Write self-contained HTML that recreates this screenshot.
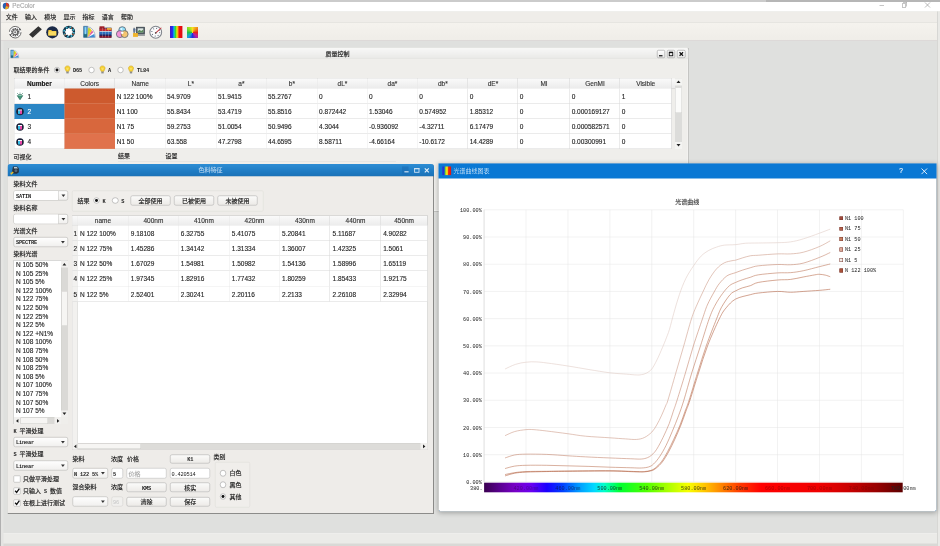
<!DOCTYPE html>
<html lang="zh"><head><meta charset="utf-8"><title>PeColor</title>
<style>
html,body{margin:0;padding:0;}
body{width:940px;height:546px;overflow:hidden;background:#dfe0df;position:relative;}
#app{position:absolute;left:0;top:0;width:1880px;height:1092px;transform:scale(.5);transform-origin:0 0;overflow:hidden;filter:opacity(1);font-family:"Liberation Sans","Noto Sans CJK SC",sans-serif;color:#222;}
#app div{position:absolute;box-sizing:border-box;}
#app svg{position:absolute;overflow:visible;}
.t{white-space:nowrap;}
.zh{font-family:"Liberation Sans","Noto Sans CJK SC",sans-serif;font-size:12px;color:#1a1a1a;-webkit-text-stroke:0.3px currentColor;}
.mono{font-family:"Liberation Mono","Noto Sans CJK SC",monospace;font-size:10.6px;letter-spacing:-0.36px;color:#1a1a1a;font-weight:bold;}
.ui{font-family:"Liberation Sans","Noto Sans CJK SC",sans-serif;font-size:13px;color:#1e1e1e;-webkit-text-stroke:0.25px currentColor;}
.btn{border:1px solid #a9a9a9;border-radius:4px;background:linear-gradient(#fbfbfa,#eceae7);}
.inp{border:1px solid #b4b4b4;border-radius:4px;background:#fff;}
.hdr{background:linear-gradient(#fafafa,#ececec);border-right:1px solid #d0d0d0;border-bottom:1px solid #c8c8c8;}
.ax{font-family:"Liberation Mono","Noto Sans CJK SC",monospace;font-size:10.4px;color:#222;}
.cell{background:#fff;border-right:1px solid #d6d6d6;border-bottom:1px solid #d6d6d6;}
</style></head><body><div id="app">
<div style="left:0px;top:0px;width:1880px;height:4px;background:#cbcbcb;"></div>
<div style="left:1532px;top:0px;width:348px;height:4px;background:#b6b6b6;"></div>
<div style="left:0px;top:4px;width:1880px;height:19px;background:#fff;"></div>
<svg style="left:5.2px;top:5.2px" width="14" height="14" viewBox="0 0 14 14"><circle cx="7" cy="7" r="6.5" fill="#2a5fb0"/><path d="M7 7 L7 .5 A6.5 6.5 0 0 1 13 9 Z" fill="#d93a2a"/><path d="M7 7 L13 9 A6.5 6.5 0 0 1 5 13.2 Z" fill="#f0b020"/></svg>
<div class="t ui" style="left:24.4px;top:2px;height:20px;line-height:20px;text-align:left;color:#a9a9a9;font-size:12.6px;">PeColor</div>
<div style="left:1758.8px;top:10px;width:9.2px;height:1.2px;background:#8c8c8c;"></div>
<div style="left:1804px;top:6.8px;width:8px;height:8px;border:1px solid #8c8c8c;"></div>
<div style="left:1806px;top:5.2px;width:8px;height:8px;border:1px solid #8c8c8c;border-left:none;border-bottom:none;"></div>
<svg style="left:1850px;top:5.2px" width="10" height="10" viewBox="0 0 10 10"><path d="M0 0L10 10M10 0L0 10" stroke="#8c8c8c" stroke-width="1.2"/></svg>
<div style="left:0px;top:23px;width:1880px;height:21px;background:#efede9;"></div>
<div class="t zh" style="left:11.6px;top:23.6px;height:20px;line-height:20px;text-align:left;">文件</div>
<div class="t zh" style="left:50px;top:23.6px;height:20px;line-height:20px;text-align:left;">输入</div>
<div class="t zh" style="left:88.4px;top:23.6px;height:20px;line-height:20px;text-align:left;">模块</div>
<div class="t zh" style="left:126.8px;top:23.6px;height:20px;line-height:20px;text-align:left;">显示</div>
<div class="t zh" style="left:165.2px;top:23.6px;height:20px;line-height:20px;text-align:left;">指标</div>
<div class="t zh" style="left:203.6px;top:23.6px;height:20px;line-height:20px;text-align:left;">语言</div>
<div class="t zh" style="left:242px;top:23.6px;height:20px;line-height:20px;text-align:left;">帮助</div>
<div style="left:0px;top:44px;width:1880px;height:38.4px;background:linear-gradient(#f5f3ee,#efede8);border-top:1px solid #e3e0db;border-bottom:1px solid #d3cdcc;"></div>
<div style="left:0px;top:82.4px;width:1880px;height:984px;background:#dfe0de;"></div>
<div style="left:0px;top:1067px;width:1880px;height:25px;background:#ebebe8;border-top:1px solid #f6f6f4;"></div>
<div style="left:0px;top:1087px;width:1880px;height:5px;background:#d9d9d6;"></div>
<div style="left:0px;top:4px;width:2.4px;height:1088px;background:#b0b0b0;"></div>
<div style="left:2.4px;top:82px;width:4.4px;height:1010px;background:#e4e4e2;"></div>
<div style="left:1874px;top:23px;width:6px;height:1070px;background:#e9e9e6;border-left:1px solid #c4c4c2;"></div>
<svg style="left:17.2px;top:51px" width="26.8" height="26.8" viewBox="0 0 24 24"><circle cx="12" cy="12" r="10.4" fill="#fdfdfd" stroke="#626262" stroke-width="1.700" stroke-dasharray="27 5.700"/><path d="M20.500 4.500 l2.200 3.800 l-4.200 .4Z M3.500 19.500 l-2.200 -3.800 l4.200 -.4Z" fill="#555"/><circle cx="12" cy="12" r="6.200" fill="none" stroke="#5c5c5c" stroke-width="2.800" stroke-dasharray="2.600 1.300"/><circle cx="12" cy="12" r="4.500" fill="#f4f4f4" stroke="#5c5c5c" stroke-width="1.800"/><circle cx="12" cy="12" r="1.900" fill="#777"/></svg>
<svg style="left:58.4px;top:51.4px" width="26" height="26" viewBox="0 0 24 24"><path d="M0.200 16.700 L17.200 1.200 L23.800 7.100 L6.800 22.600 Z" fill="#2f2f2f"/><path d="M5 16.500 L17.500 5.200 M8 19 L20 8" stroke="#4c4c4c" stroke-width="1"/></svg>
<svg style="left:91.6px;top:51.6px" width="25.2" height="25.2" viewBox="0 0 24 24"><circle cx="12" cy="12" r="11.600" fill="#1c2b48"/><path d="M4.500 7.500 h5.500 l1.500 2 h8 v8.500 h-15 Z" fill="#f0c43c"/><path d="M4.500 10.500 h15 v7.500 h-15 Z" fill="#fadc62"/></svg>
<svg style="left:124.8px;top:51.4px" width="25.6" height="25.6" viewBox="0 0 24 24"><circle cx="12" cy="12" r="11.600" fill="#15344a"/><circle cx="12" cy="12" r="9" fill="none" stroke="#3fb4cc" stroke-width="3.400" stroke-dasharray="3.200 3.870"/><circle cx="5" cy="17.500" r="1.600" fill="#b0683c"/><circle cx="19.500" cy="16.500" r="1.600" fill="#b0683c"/><circle cx="17" cy="4.500" r="1.400" fill="#b0683c"/><path d="M12 4 L14.300 6.450 L17.660 6.340 L17.550 9.700 L20 12 L17.550 14.300 L17.660 17.660 L14.300 17.550 L12 20 L9.700 17.550 L6.340 17.660 L6.450 14.300 L4 12 L6.450 9.700 L6.340 6.340 L9.700 6.450Z" fill="#fff"/></svg>
<svg style="left:165px;top:51.4px" width="26" height="26" viewBox="0 0 24 24"><path d="M2 1.500 h7.500 v20.500 h-7.500 Z" fill="#3d8ec6" stroke="#2a5c88" stroke-width="1"/><path d="M2.500 15 h6.500 v6.500 h-6.500Z" fill="#1f6a80"/><path d="M4 3 h3 v13 h-3 Z" fill="#8ed4f0"/><path d="M9.500 22 L9.500 2.500 A14 19.500 0 0 1 23.500 22 Z" fill="#fafafa" stroke="#6a83a8" stroke-width="1"/><path d="M9.500 22 L10.500 3.500 L15 6Z" fill="#b8d030"/><path d="M9.500 22 L14 5.500 L17.500 9Z" fill="#f0cc20"/><path d="M9.500 22 L17.500 9 L20 12.500Z" fill="#e05aa0"/><path d="M9.500 22 L21.600 15.500 L23 21.500Z" fill="#3d8cd4"/></svg>
<svg style="left:198.2px;top:51.4px" width="26" height="26" viewBox="0 0 24 24"><rect x="1" y="4" width="22" height="18.500" fill="#1c2a5a"/><rect x="1" y="1.500" width="9" height="4.500" fill="#9c1c24"/><rect x="1" y="5.500" width="22" height="5" fill="#c02830"/><rect x="1" y="10.200" width="22" height="1.600" fill="#dce8f4"/><rect x="1" y="11.800" width="22" height="5.200" fill="#2a6cbc"/><rect x="1" y="17" width="22" height="2.500" fill="#2a1c58"/><rect x="1" y="19.500" width="22" height="3" fill="#8c1428"/><path d="M6.500 4V22M12 4V22M17.500 4V22" stroke="#efe6da" stroke-width="0.900" opacity=".55"/><rect x="14.500" y="4.500" width="8.500" height="3.600" fill="#e4a838"/></svg>
<svg style="left:231.3px;top:50.9px" width="27" height="27" viewBox="0 0 24 24"><circle cx="12" cy="8.300" r="6.200" fill="#8fdcf6" stroke="#59626e" stroke-width="1.400"/><circle cx="7.800" cy="15.300" r="6.200" fill="#f48ad4" stroke="#59626e" stroke-width="1.400" fill-opacity=".92"/><circle cx="16.200" cy="15.300" r="6.200" fill="#f6c266" stroke="#59626e" stroke-width="1.400" fill-opacity=".92"/><circle cx="12" cy="12.800" r="2.300" fill="#fff"/><circle cx="10.500" cy="6.200" r="1.800" fill="#e8f8ff"/></svg>
<svg style="left:265px;top:51.4px" width="26" height="26" viewBox="0 0 24 24"><rect x="7" y="3" width="15.500" height="12.500" fill="#4f5962" stroke="#343c44" stroke-width="1"/><rect x="9.500" y="5.200" width="10.500" height="7.600" fill="#dfe8e4"/><path d="M9.500 10.500 l3.500 -2.500 l3 2 l4 -2.500 v5.300 h-10.500Z" fill="#5c8c5c"/><rect x="5" y="16" width="18" height="3" fill="#8a8f92"/><path d="M3 4 v12" stroke="#4a5a66" stroke-width="2"/><rect x="1" y="14" width="9" height="7" fill="#f0b428"/><path d="M1 7 h5 M1 10 h5" stroke="#3f5f8f" stroke-width="1.4"/></svg>
<svg style="left:298.1px;top:50.9px" width="27" height="27" viewBox="0 0 24 24"><circle cx="12" cy="12" r="10.5" fill="#fbfbfb" stroke="#80858c" stroke-width="1.8"/><circle cx="12" cy="12" r="7" fill="none" stroke="#5d6a7c" stroke-width="2" stroke-dasharray="1.6 3.9"/><path d="M11 14 L22 4" stroke="#c8303a" stroke-width="1.8"/><circle cx="12" cy="13" r="1.6" fill="#555"/></svg>
<svg style="left:339.6px;top:52.4px" width="24.8" height="24" viewBox="0 0 62 60" preserveAspectRatio="none"><defs><linearGradient id="rb" x1="0" x2="1" y1="0" y2="0"><stop offset="0" stop-color="#4a10c8"/><stop offset=".2" stop-color="#2030f0"/><stop offset=".32" stop-color="#10b8e8"/><stop offset=".44" stop-color="#30d830"/><stop offset=".57" stop-color="#f0f010"/><stop offset=".66" stop-color="#f87010"/><stop offset=".75" stop-color="#f01010"/><stop offset="1" stop-color="#e00810"/></linearGradient></defs><rect width="62" height="60" fill="url(#rb)"/></svg>
<div style="left:374px;top:53.6px;width:22px;height:22px;background:conic-gradient(from 0deg,#f8e020,#f09018 12%,#e82020 25%,#c020a0 37%,#2030e0 50%,#18a0e0 62%,#20c040 75%,#90e020 88%,#f8e020);"></div>
<div style="left:16px;top:95.2px;width:1361.6px;height:328px;background:#efeeeb;border:1px solid #9c9c9a;border-bottom:1.6px solid #6a6a68;border-radius:5px 5px 0 0;box-shadow:inset 0 0 0 2px #f7f7f5;"></div>
<div style="left:17px;top:96.2px;width:1359.6px;height:22.2px;background:linear-gradient(#f8f8f7,#e9e9e7);border-bottom:1px solid #c9c9c7;border-radius:4px 4px 0 0;"></div>
<svg style="left:20.2px;top:99px" width="18" height="18" viewBox="0 0 24 24"><path d="M2 1.500 h7.500 v20.500 h-7.500 Z" fill="#3d8ec6" stroke="#2a5c88" stroke-width="1"/><path d="M2.500 15 h6.500 v6.500 h-6.500Z" fill="#1f6a80"/><path d="M4 3 h3 v13 h-3 Z" fill="#8ed4f0"/><path d="M9.500 22 L9.500 2.500 A14 19.500 0 0 1 23.500 22 Z" fill="#fafafa" stroke="#6a83a8" stroke-width="1"/><path d="M9.500 22 L10.500 3.500 L15 6Z" fill="#b8d030"/><path d="M9.500 22 L14 5.500 L17.500 9Z" fill="#f0cc20"/><path d="M9.500 22 L17.500 9 L20 12.500Z" fill="#e05aa0"/><path d="M9.500 22 L21.600 15.500 L23 21.500Z" fill="#3d8cd4"/></svg>
<div class="t zh" style="left:0px;top:97.6px;height:20px;line-height:20px;width:1350px;text-align:center;">质量控制</div>
<div style="left:1314px;top:100px;width:16px;height:16px;border:1px solid #8f8f8f;border-radius:3px;background:linear-gradient(#fff,#e8e8e8);"></div>
<svg style="left:1314px;top:100px" width="16" height="16" viewBox="0 0 16 16"><path d="M4 11.5h7" stroke="#111" stroke-width="2.4"/></svg>
<div style="left:1334px;top:100px;width:16px;height:16px;border:1px solid #8f8f8f;border-radius:3px;background:linear-gradient(#fff,#e8e8e8);"></div>
<svg style="left:1334px;top:100px" width="16" height="16" viewBox="0 0 16 16"><rect x="4.5" y="4.5" width="7" height="7" fill="none" stroke="#111" stroke-width="1.8"/><path d="M4.5 5h7" stroke="#111" stroke-width="2.6"/></svg>
<div style="left:1354px;top:100px;width:17.2px;height:16px;border:1px solid #8f8f8f;border-radius:3px;background:linear-gradient(#fff,#e8e8e8);"></div>
<svg style="left:1354px;top:100px" width="17.2" height="16" viewBox="0 0 16 16"><path d="M4.5 4.5L11.5 11.5M11.5 4.5L4.5 11.5" stroke="#111" stroke-width="2.4"/></svg>
<div class="t zh" style="left:27.2px;top:130px;height:20px;line-height:20px;text-align:left;">取结果的条件</div>
<div style="left:107.8px;top:133.8px;width:12.4px;height:12.4px;border-radius:50%;background:#fff;border:1px solid #8c8c8c;"></div>
<div style="left:111.2px;top:137.2px;width:5.6px;height:5.6px;border-radius:50%;background:#111;"></div>
<svg style="left:129.2px;top:131.2px" width="12" height="16.8" viewBox="0 0 12 17"><path d="M6 .8 C2.6 .8 .8 3.2 .8 5.8 C.8 8.4 3 9.6 3.4 12 h5.2 C9 9.6 11.2 8.4 11.2 5.8 C11.2 3.2 9.4 .8 6 .8Z" fill="#f7d436" stroke="#c79a10" stroke-width="1"/><rect x="3.6" y="12.4" width="4.8" height="3.6" fill="#8d8d8d"/><path d="M4.6 5.5 L6 8 L7.4 5.5" stroke="#fff7c0" stroke-width="1" fill="none"/></svg>
<div class="t mono" style="left:146px;top:131.2px;height:20px;line-height:20px;text-align:left;">D65</div>
<div style="left:177px;top:133.8px;width:12.4px;height:12.4px;border-radius:50%;background:#fff;border:1px solid #8c8c8c;"></div>
<svg style="left:198.8px;top:131.2px" width="12" height="16.8" viewBox="0 0 12 17"><path d="M6 .8 C2.6 .8 .8 3.2 .8 5.8 C.8 8.4 3 9.6 3.4 12 h5.2 C9 9.6 11.2 8.4 11.2 5.8 C11.2 3.2 9.4 .8 6 .8Z" fill="#f7d436" stroke="#c79a10" stroke-width="1"/><rect x="3.6" y="12.4" width="4.8" height="3.6" fill="#8d8d8d"/><path d="M4.6 5.5 L6 8 L7.4 5.5" stroke="#fff7c0" stroke-width="1" fill="none"/></svg>
<div class="t mono" style="left:216px;top:131.2px;height:20px;line-height:20px;text-align:left;">A</div>
<div style="left:234.6px;top:133.8px;width:12.4px;height:12.4px;border-radius:50%;background:#fff;border:1px solid #8c8c8c;"></div>
<svg style="left:256px;top:131.2px" width="12" height="16.8" viewBox="0 0 12 17"><path d="M6 .8 C2.6 .8 .8 3.2 .8 5.8 C.8 8.4 3 9.6 3.4 12 h5.2 C9 9.6 11.2 8.4 11.2 5.8 C11.2 3.2 9.4 .8 6 .8Z" fill="#f7d436" stroke="#c79a10" stroke-width="1"/><rect x="3.6" y="12.4" width="4.8" height="3.6" fill="#8d8d8d"/><path d="M4.6 5.5 L6 8 L7.4 5.5" stroke="#fff7c0" stroke-width="1" fill="none"/></svg>
<div class="t mono" style="left:274px;top:131.2px;height:20px;line-height:20px;text-align:left;">TL84</div>
<div style="left:27.8px;top:155.8px;width:1315px;height:142.2px;background:#fff;border:1px solid #c2c2c0;"></div>
<div class="hdr" style="left:28.8px;top:156.8px;width:100px;height:20px;"></div>
<div class="t ui" style="left:28.8px;top:157.2px;height:20px;line-height:20px;width:100px;text-align:center;font-weight:bold;color:#111;">Number</div>
<div class="hdr" style="left:128.8px;top:156.8px;width:101.2px;height:20px;"></div>
<div class="t ui" style="left:128.8px;top:157.2px;height:20px;line-height:20px;width:101.2px;text-align:center;color:#333;">Colors</div>
<div class="hdr" style="left:230px;top:156.8px;width:100.8px;height:20px;"></div>
<div class="t ui" style="left:230px;top:157.2px;height:20px;line-height:20px;width:100.8px;text-align:center;color:#333;">Name</div>
<div class="hdr" style="left:330.8px;top:156.8px;width:102px;height:20px;"></div>
<div class="t ui" style="left:330.8px;top:157.2px;height:20px;line-height:20px;width:102px;text-align:center;color:#333;">L*</div>
<div class="hdr" style="left:432.8px;top:156.8px;width:100px;height:20px;"></div>
<div class="t ui" style="left:432.8px;top:157.2px;height:20px;line-height:20px;width:100px;text-align:center;color:#333;">a*</div>
<div class="hdr" style="left:532.8px;top:156.8px;width:102px;height:20px;"></div>
<div class="t ui" style="left:532.8px;top:157.2px;height:20px;line-height:20px;width:102px;text-align:center;color:#333;">b*</div>
<div class="hdr" style="left:634.8px;top:156.8px;width:100px;height:20px;"></div>
<div class="t ui" style="left:634.8px;top:157.2px;height:20px;line-height:20px;width:100px;text-align:center;color:#333;">dL*</div>
<div class="hdr" style="left:734.8px;top:156.8px;width:100.4px;height:20px;"></div>
<div class="t ui" style="left:734.8px;top:157.2px;height:20px;line-height:20px;width:100.4px;text-align:center;color:#333;">da*</div>
<div class="hdr" style="left:835.2px;top:156.8px;width:100.8px;height:20px;"></div>
<div class="t ui" style="left:835.2px;top:157.2px;height:20px;line-height:20px;width:100.8px;text-align:center;color:#333;">db*</div>
<div class="hdr" style="left:936px;top:156.8px;width:100px;height:20px;"></div>
<div class="t ui" style="left:936px;top:157.2px;height:20px;line-height:20px;width:100px;text-align:center;color:#333;">dE*</div>
<div class="hdr" style="left:1036px;top:156.8px;width:104px;height:20px;"></div>
<div class="t ui" style="left:1036px;top:157.2px;height:20px;line-height:20px;width:104px;text-align:center;color:#333;">MI</div>
<div class="hdr" style="left:1140px;top:156.8px;width:100px;height:20px;"></div>
<div class="t ui" style="left:1140px;top:157.2px;height:20px;line-height:20px;width:100px;text-align:center;color:#333;">GenMI</div>
<div class="hdr" style="left:1240px;top:156.8px;width:102.8px;height:20px;"></div>
<div class="t ui" style="left:1240px;top:157.2px;height:20px;line-height:20px;width:102.8px;text-align:center;color:#333;">Visible</div>
<div class="cell" style="left:28.8px;top:176.8px;width:100px;height:30.8px;"></div>
<svg style="left:31.6px;top:184.6px" width="16" height="16" viewBox="0 0 16 16"><path d="M2.500 6.500 L5.500 4 H10.500 L13.500 6.500 L8 14.500 Z" fill="#3f9478" stroke="#1f5a48" stroke-width="1.200"/><path d="M3 6 H13 M6 3.500 L8 6 L10 3.500" stroke="#cfeee2" stroke-width=".8" fill="none"/><path d="M8 .3V2.200M2.500 1.500L4 3M13.500 1.500L12 3" stroke="#2f7a62" stroke-width="1.500"/></svg>
<div class="t ui" style="left:55.2px;top:183px;height:20px;line-height:20px;text-align:left;">1</div>
<div class="cell" style="left:128.8px;top:176.8px;width:101.2px;height:30.8px;background:#cd5a2e;border-color:#cd5a2e;border-bottom-color:#de8a68;"></div>
<div class="cell" style="left:230px;top:176.8px;width:100.8px;height:30.8px;"></div>
<div class="t ui" style="left:233.4px;top:183px;height:20px;line-height:20px;text-align:left;">N 122 100%</div>
<div class="cell" style="left:330.8px;top:176.8px;width:102px;height:30.8px;"></div>
<div class="t ui" style="left:334.2px;top:183px;height:20px;line-height:20px;text-align:left;">54.9709</div>
<div class="cell" style="left:432.8px;top:176.8px;width:100px;height:30.8px;"></div>
<div class="t ui" style="left:436.2px;top:183px;height:20px;line-height:20px;text-align:left;">51.9415</div>
<div class="cell" style="left:532.8px;top:176.8px;width:102px;height:30.8px;"></div>
<div class="t ui" style="left:536.2px;top:183px;height:20px;line-height:20px;text-align:left;">55.2767</div>
<div class="cell" style="left:634.8px;top:176.8px;width:100px;height:30.8px;"></div>
<div class="t ui" style="left:638.2px;top:183px;height:20px;line-height:20px;text-align:left;">0</div>
<div class="cell" style="left:734.8px;top:176.8px;width:100.4px;height:30.8px;"></div>
<div class="t ui" style="left:738.2px;top:183px;height:20px;line-height:20px;text-align:left;">0</div>
<div class="cell" style="left:835.2px;top:176.8px;width:100.8px;height:30.8px;"></div>
<div class="t ui" style="left:838.6px;top:183px;height:20px;line-height:20px;text-align:left;">0</div>
<div class="cell" style="left:936px;top:176.8px;width:100px;height:30.8px;"></div>
<div class="t ui" style="left:939.4px;top:183px;height:20px;line-height:20px;text-align:left;">0</div>
<div class="cell" style="left:1036px;top:176.8px;width:104px;height:30.8px;"></div>
<div class="t ui" style="left:1039.4px;top:183px;height:20px;line-height:20px;text-align:left;">0</div>
<div class="cell" style="left:1140px;top:176.8px;width:100px;height:30.8px;"></div>
<div class="t ui" style="left:1143.4px;top:183px;height:20px;line-height:20px;text-align:left;">0</div>
<div class="cell" style="left:1240px;top:176.8px;width:102.8px;height:30.8px;"></div>
<div class="t ui" style="left:1243.4px;top:183px;height:20px;line-height:20px;text-align:left;">1</div>
<div class="cell" style="left:28.8px;top:207.6px;width:100px;height:30.2px;background:#2b86c5;border-color:#2b86c5;"></div>
<svg style="left:31.6px;top:215.1px" width="16" height="16" viewBox="0 0 16 16"><circle cx="8" cy="8" r="7.600" fill="#1c2238"/><path d="M4 5.500 h4 v6 a2 2 0 0 1 -4 0Z" fill="#38c0e8"/><path d="M8 5.500 h4 v6 a2 2 0 0 1 -4 0Z" fill="#e848a8"/><path d="M4 4 h8 v2 h-8Z" fill="#f4f4f8"/></svg>
<div class="t ui" style="left:55.2px;top:213.5px;height:20px;line-height:20px;text-align:left;color:#fff;">2</div>
<div class="cell" style="left:128.8px;top:207.6px;width:101.2px;height:30.2px;background:#d25e33;border-color:#d25e33;border-bottom-color:#de8a68;"></div>
<div class="cell" style="left:230px;top:207.6px;width:100.8px;height:30.2px;"></div>
<div class="t ui" style="left:233.4px;top:213.5px;height:20px;line-height:20px;text-align:left;">N1 100</div>
<div class="cell" style="left:330.8px;top:207.6px;width:102px;height:30.2px;"></div>
<div class="t ui" style="left:334.2px;top:213.5px;height:20px;line-height:20px;text-align:left;">55.8434</div>
<div class="cell" style="left:432.8px;top:207.6px;width:100px;height:30.2px;"></div>
<div class="t ui" style="left:436.2px;top:213.5px;height:20px;line-height:20px;text-align:left;">53.4719</div>
<div class="cell" style="left:532.8px;top:207.6px;width:102px;height:30.2px;"></div>
<div class="t ui" style="left:536.2px;top:213.5px;height:20px;line-height:20px;text-align:left;">55.8516</div>
<div class="cell" style="left:634.8px;top:207.6px;width:100px;height:30.2px;"></div>
<div class="t ui" style="left:638.2px;top:213.5px;height:20px;line-height:20px;text-align:left;">0.872442</div>
<div class="cell" style="left:734.8px;top:207.6px;width:100.4px;height:30.2px;"></div>
<div class="t ui" style="left:738.2px;top:213.5px;height:20px;line-height:20px;text-align:left;">1.53046</div>
<div class="cell" style="left:835.2px;top:207.6px;width:100.8px;height:30.2px;"></div>
<div class="t ui" style="left:838.6px;top:213.5px;height:20px;line-height:20px;text-align:left;">0.574952</div>
<div class="cell" style="left:936px;top:207.6px;width:100px;height:30.2px;"></div>
<div class="t ui" style="left:939.4px;top:213.5px;height:20px;line-height:20px;text-align:left;">1.85312</div>
<div class="cell" style="left:1036px;top:207.6px;width:104px;height:30.2px;"></div>
<div class="t ui" style="left:1039.4px;top:213.5px;height:20px;line-height:20px;text-align:left;">0</div>
<div class="cell" style="left:1140px;top:207.6px;width:100px;height:30.2px;"></div>
<div class="t ui" style="left:1143.4px;top:213.5px;height:20px;line-height:20px;text-align:left;">0.000169127</div>
<div class="cell" style="left:1240px;top:207.6px;width:102.8px;height:30.2px;"></div>
<div class="t ui" style="left:1243.4px;top:213.5px;height:20px;line-height:20px;text-align:left;">0</div>
<div class="cell" style="left:28.8px;top:237.8px;width:100px;height:30.6px;"></div>
<svg style="left:31.6px;top:245.5px" width="16" height="16" viewBox="0 0 16 16"><circle cx="8" cy="8" r="7.600" fill="#1c2238"/><path d="M4 5.500 h4 v6 a2 2 0 0 1 -4 0Z" fill="#38c0e8"/><path d="M8 5.500 h4 v6 a2 2 0 0 1 -4 0Z" fill="#e848a8"/><path d="M4 4 h8 v2 h-8Z" fill="#f4f4f8"/></svg>
<div class="t ui" style="left:55.2px;top:243.9px;height:20px;line-height:20px;text-align:left;">3</div>
<div class="cell" style="left:128.8px;top:237.8px;width:101.2px;height:30.6px;background:#d8673d;border-color:#d8673d;border-bottom-color:#de8a68;"></div>
<div class="cell" style="left:230px;top:237.8px;width:100.8px;height:30.6px;"></div>
<div class="t ui" style="left:233.4px;top:243.9px;height:20px;line-height:20px;text-align:left;">N1 75</div>
<div class="cell" style="left:330.8px;top:237.8px;width:102px;height:30.6px;"></div>
<div class="t ui" style="left:334.2px;top:243.9px;height:20px;line-height:20px;text-align:left;">59.2753</div>
<div class="cell" style="left:432.8px;top:237.8px;width:100px;height:30.6px;"></div>
<div class="t ui" style="left:436.2px;top:243.9px;height:20px;line-height:20px;text-align:left;">51.0054</div>
<div class="cell" style="left:532.8px;top:237.8px;width:102px;height:30.6px;"></div>
<div class="t ui" style="left:536.2px;top:243.9px;height:20px;line-height:20px;text-align:left;">50.9496</div>
<div class="cell" style="left:634.8px;top:237.8px;width:100px;height:30.6px;"></div>
<div class="t ui" style="left:638.2px;top:243.9px;height:20px;line-height:20px;text-align:left;">4.3044</div>
<div class="cell" style="left:734.8px;top:237.8px;width:100.4px;height:30.6px;"></div>
<div class="t ui" style="left:738.2px;top:243.9px;height:20px;line-height:20px;text-align:left;">-0.936092</div>
<div class="cell" style="left:835.2px;top:237.8px;width:100.8px;height:30.6px;"></div>
<div class="t ui" style="left:838.6px;top:243.9px;height:20px;line-height:20px;text-align:left;">-4.32711</div>
<div class="cell" style="left:936px;top:237.8px;width:100px;height:30.6px;"></div>
<div class="t ui" style="left:939.4px;top:243.9px;height:20px;line-height:20px;text-align:left;">6.17479</div>
<div class="cell" style="left:1036px;top:237.8px;width:104px;height:30.6px;"></div>
<div class="t ui" style="left:1039.4px;top:243.9px;height:20px;line-height:20px;text-align:left;">0</div>
<div class="cell" style="left:1140px;top:237.8px;width:100px;height:30.6px;"></div>
<div class="t ui" style="left:1143.4px;top:243.9px;height:20px;line-height:20px;text-align:left;">0.000582571</div>
<div class="cell" style="left:1240px;top:237.8px;width:102.8px;height:30.6px;"></div>
<div class="t ui" style="left:1243.4px;top:243.9px;height:20px;line-height:20px;text-align:left;">0</div>
<div class="cell" style="left:28.8px;top:268.4px;width:100px;height:29.6px;"></div>
<svg style="left:31.6px;top:275.6px" width="16" height="16" viewBox="0 0 16 16"><circle cx="8" cy="8" r="7.600" fill="#1c2238"/><path d="M4 5.500 h4 v6 a2 2 0 0 1 -4 0Z" fill="#38c0e8"/><path d="M8 5.500 h4 v6 a2 2 0 0 1 -4 0Z" fill="#e848a8"/><path d="M4 4 h8 v2 h-8Z" fill="#f4f4f8"/></svg>
<div class="t ui" style="left:55.2px;top:274px;height:20px;line-height:20px;text-align:left;">4</div>
<div class="cell" style="left:128.8px;top:268.4px;width:101.2px;height:29.6px;background:#e0724c;border-color:#e0724c;border-bottom-color:#de8a68;"></div>
<div class="cell" style="left:230px;top:268.4px;width:100.8px;height:29.6px;"></div>
<div class="t ui" style="left:233.4px;top:274px;height:20px;line-height:20px;text-align:left;">N1 50</div>
<div class="cell" style="left:330.8px;top:268.4px;width:102px;height:29.6px;"></div>
<div class="t ui" style="left:334.2px;top:274px;height:20px;line-height:20px;text-align:left;">63.558</div>
<div class="cell" style="left:432.8px;top:268.4px;width:100px;height:29.6px;"></div>
<div class="t ui" style="left:436.2px;top:274px;height:20px;line-height:20px;text-align:left;">47.2798</div>
<div class="cell" style="left:532.8px;top:268.4px;width:102px;height:29.6px;"></div>
<div class="t ui" style="left:536.2px;top:274px;height:20px;line-height:20px;text-align:left;">44.6595</div>
<div class="cell" style="left:634.8px;top:268.4px;width:100px;height:29.6px;"></div>
<div class="t ui" style="left:638.2px;top:274px;height:20px;line-height:20px;text-align:left;">8.58711</div>
<div class="cell" style="left:734.8px;top:268.4px;width:100.4px;height:29.6px;"></div>
<div class="t ui" style="left:738.2px;top:274px;height:20px;line-height:20px;text-align:left;">-4.66164</div>
<div class="cell" style="left:835.2px;top:268.4px;width:100.8px;height:29.6px;"></div>
<div class="t ui" style="left:838.6px;top:274px;height:20px;line-height:20px;text-align:left;">-10.6172</div>
<div class="cell" style="left:936px;top:268.4px;width:100px;height:29.6px;"></div>
<div class="t ui" style="left:939.4px;top:274px;height:20px;line-height:20px;text-align:left;">14.4289</div>
<div class="cell" style="left:1036px;top:268.4px;width:104px;height:29.6px;"></div>
<div class="t ui" style="left:1039.4px;top:274px;height:20px;line-height:20px;text-align:left;">0</div>
<div class="cell" style="left:1140px;top:268.4px;width:100px;height:29.6px;"></div>
<div class="t ui" style="left:1143.4px;top:274px;height:20px;line-height:20px;text-align:left;">0.00300991</div>
<div class="cell" style="left:1240px;top:268.4px;width:102.8px;height:29.6px;"></div>
<div class="t ui" style="left:1243.4px;top:274px;height:20px;line-height:20px;text-align:left;">0</div>
<div class="hdr" style="left:1342.8px;top:156.8px;width:7.2px;height:20px;border-right:none;"></div>
<div style="left:1350px;top:156.8px;width:13.6px;height:141.2px;background:#dcdcda;"></div>
<div style="left:1350px;top:156.8px;width:13.6px;height:14px;background:#f4f4f2;"></div>
<div style="left:1350px;top:284px;width:13.6px;height:14px;background:#f4f4f2;"></div>
<div style="left:1350px;top:174.8px;width:13.6px;height:50.8px;background:#fbfbfa;border:1px solid #cfcfcd;"></div>
<svg style="left:1352.8px;top:160.8px" width="8" height="5.2" viewBox="0 0 8 5"><path d="M0 5L4 0L8 5Z" fill="#222"/></svg>
<svg style="left:1352.8px;top:288.4px" width="8" height="5.2" viewBox="0 0 8 5"><path d="M0 0L4 5L8 0Z" fill="#222"/></svg>
<div class="t zh" style="left:27.2px;top:304px;height:20px;line-height:20px;text-align:left;">可视化</div>
<div class="t zh" style="left:236px;top:301.6px;height:20px;line-height:20px;text-align:left;">结果</div>
<div class="t zh" style="left:331.2px;top:301.6px;height:20px;line-height:20px;text-align:left;">设置</div>
<div style="left:236px;top:323.2px;width:556px;height:1px;background:#dddcd8;"></div>
<div style="left:14.6px;top:328.2px;width:853.4px;height:699.8px;background:#eeece9;border:2px solid #8c8c8a;border-left:1px solid #bcbcba;border-top:none;border-radius:6px 6px 0 0;"></div>
<div style="left:14.6px;top:328.2px;width:853.4px;height:24.8px;background:linear-gradient(#2d8dd4,#1f7cc4 60%,#1b72b8);border-radius:6px 6px 0 0;border-bottom:1px solid #17629f;"></div>
<svg style="left:20px;top:332px" width="18.8" height="17.6" viewBox="0 0 19 18"><path d="M6 1 h9 l3 4 v8 l-4 3 h-7 l-3 -5 Z" fill="#27323e"/><path d="M8 2 h6 l2 3 h-8Z" fill="#b8ccd8"/><circle cx="12" cy="9.500" r="3" fill="#55687a"/><path d="M1 15.500 L5 11 L7.500 13.500 L3 17.500Z" fill="#f0c020"/><path d="M0 14 l2 1 M2 18 l1 -2" stroke="#f8e060" stroke-width="1"/></svg>
<div class="t zh" style="left:397px;top:330.4px;height:20px;line-height:20px;text-align:left;color:#a9cdec;">色料特征</div>
<svg style="left:804px;top:332px" width="60" height="18" viewBox="0 0 60 18"><rect x="0" y="1" width="13" height="16" fill="#1a6db4" opacity=".6"/><path d="M4.800 11.600h8.400" stroke="#cfe2f3" stroke-width="2.400"/><rect x="25.200" y="5" width="8.800" height="7.600" fill="none" stroke="#cfe2f3" stroke-width="1.800"/><path d="M24.400 5.400h10.400" stroke="#cfe2f3" stroke-width="2.400"/><path d="M45.600 4.600L53.600 12.600M53.600 4.600L45.600 12.600" stroke="#e4eff9" stroke-width="2.300"/></svg>
<div class="t zh" style="left:27.2px;top:358.4px;height:20px;line-height:20px;text-align:left;">染料文件</div>
<div style="left:27.2px;top:381.2px;width:109.2px;height:20px;border:1px solid #b0b0ae;border-radius:4px;background:linear-gradient(#fefefe,#f1f0ee);"></div>
<div style="left:116.4px;top:382.2px;width:1px;height:18px;background:#c4c4c2;"></div>
<div style="left:28.2px;top:382.2px;width:88.2px;height:18px;background:#fff;border-radius:3px 0 0 3px;"></div>
<svg style="left:122.8px;top:389px" width="7.6" height="4.8" viewBox="0 0 8 5"><path d="M0 0L4 5L8 0Z" fill="#333"/></svg>
<div class="t mono" style="left:32px;top:382.4px;height:20px;line-height:20px;text-align:left;">SATIN</div>
<div class="t zh" style="left:27.2px;top:405.2px;height:20px;line-height:20px;text-align:left;">染料名称</div>
<div style="left:27.2px;top:428px;width:109.2px;height:20px;border:1px solid #b0b0ae;border-radius:4px;background:linear-gradient(#fefefe,#f1f0ee);"></div>
<div style="left:116.4px;top:429px;width:1px;height:18px;background:#c4c4c2;"></div>
<div style="left:28.2px;top:429px;width:88.2px;height:18px;background:#fff;border-radius:3px 0 0 3px;"></div>
<svg style="left:122.8px;top:435.8px" width="7.6" height="4.8" viewBox="0 0 8 5"><path d="M0 0L4 5L8 0Z" fill="#333"/></svg>
<div class="t zh" style="left:27.2px;top:452px;height:20px;line-height:20px;text-align:left;">光谱文件</div>
<div style="left:27.2px;top:474px;width:109.2px;height:20px;border:1px solid #b0b0ae;border-radius:4px;background:linear-gradient(#fefefe,#f1f0ee);"></div>
<svg style="left:121.6px;top:481.8px" width="7.6" height="4.8" viewBox="0 0 8 5"><path d="M0 0L4 5L8 0Z" fill="#333"/></svg>
<div class="t mono" style="left:32px;top:475.2px;height:20px;line-height:20px;text-align:left;">SPECTRE</div>
<div class="t zh" style="left:27.2px;top:498.4px;height:20px;line-height:20px;text-align:left;">染料光谱</div>
<div style="left:27.2px;top:520px;width:109.2px;height:328.4px;background:#fff;border:1px solid #b4b4b2;"></div>
<div class="t ui" style="left:32px;top:519.4px;height:20px;line-height:20px;text-align:left;">N 105 50%</div>
<div class="t ui" style="left:32px;top:536.62px;height:20px;line-height:20px;text-align:left;">N 105 25%</div>
<div class="t ui" style="left:32px;top:553.84px;height:20px;line-height:20px;text-align:left;">N 105 5%</div>
<div class="t ui" style="left:32px;top:571.06px;height:20px;line-height:20px;text-align:left;">N 122 100%</div>
<div class="t ui" style="left:32px;top:588.28px;height:20px;line-height:20px;text-align:left;">N 122 75%</div>
<div class="t ui" style="left:32px;top:605.5px;height:20px;line-height:20px;text-align:left;">N 122 50%</div>
<div class="t ui" style="left:32px;top:622.72px;height:20px;line-height:20px;text-align:left;">N 122 25%</div>
<div class="t ui" style="left:32px;top:639.94px;height:20px;line-height:20px;text-align:left;">N 122 5%</div>
<div class="t ui" style="left:32px;top:657.16px;height:20px;line-height:20px;text-align:left;">N 122 +N1%</div>
<div class="t ui" style="left:32px;top:674.38px;height:20px;line-height:20px;text-align:left;">N 108 100%</div>
<div class="t ui" style="left:32px;top:691.6px;height:20px;line-height:20px;text-align:left;">N 108 75%</div>
<div class="t ui" style="left:32px;top:708.82px;height:20px;line-height:20px;text-align:left;">N 108 50%</div>
<div class="t ui" style="left:32px;top:726.04px;height:20px;line-height:20px;text-align:left;">N 108 25%</div>
<div class="t ui" style="left:32px;top:743.26px;height:20px;line-height:20px;text-align:left;">N 108 5%</div>
<div class="t ui" style="left:32px;top:760.48px;height:20px;line-height:20px;text-align:left;">N 107 100%</div>
<div class="t ui" style="left:32px;top:777.7px;height:20px;line-height:20px;text-align:left;">N 107 75%</div>
<div class="t ui" style="left:32px;top:794.92px;height:20px;line-height:20px;text-align:left;">N 107 50%</div>
<div class="t ui" style="left:32px;top:812.14px;height:20px;line-height:20px;text-align:left;">N 107 5%</div>
<div style="left:122px;top:520.8px;width:13.6px;height:313.6px;background:#dad9d6;border-left:1px solid #cfcecb;"></div>
<div style="left:122px;top:520.8px;width:13.6px;height:14.4px;background:#f1f0ee;"></div>
<div style="left:122px;top:820.8px;width:13.6px;height:13.6px;background:#f1f0ee;"></div>
<div style="left:122.8px;top:582px;width:12.4px;height:70px;background:#f6f5f3;border:1px solid #cbcac7;"></div>
<svg style="left:125.2px;top:525.6px" width="7.6" height="4.8" viewBox="0 0 8 5"><path d="M0 5L4 0L8 5Z" fill="#222"/></svg>
<svg style="left:125.2px;top:825.2px" width="7.6" height="4.8" viewBox="0 0 8 5"><path d="M0 0L4 5L8 0Z" fill="#222"/></svg>
<div style="left:28px;top:834.4px;width:94px;height:13.6px;background:#dad9d6;border-top:1px solid #cfcecb;"></div>
<div style="left:28px;top:834.4px;width:12.8px;height:13.6px;background:#f1f0ee;"></div>
<div style="left:108.8px;top:834.4px;width:13.2px;height:13.6px;background:#f1f0ee;"></div>
<div style="left:41.2px;top:835.2px;width:55.2px;height:12.4px;background:#f6f5f3;border:1px solid #cbcac7;"></div>
<div style="left:122px;top:834.4px;width:13.6px;height:13.6px;background:#efeeeb;"></div>
<svg style="left:32.4px;top:837.6px" width="4.8" height="7.6" viewBox="0 0 5 8"><path d="M5 0L0 4L5 8Z" fill="#222"/></svg>
<svg style="left:114px;top:837.6px" width="4.8" height="7.6" viewBox="0 0 5 8"><path d="M0 0L5 4L0 8Z" fill="#222"/></svg>
<div class="t mono" style="left:27.2px;top:853.2px;height:20px;line-height:20px;text-align:left;">K</div>
<div class="t zh" style="left:39.2px;top:852px;height:20px;line-height:20px;text-align:left;">平滑处理</div>
<div style="left:27.2px;top:874px;width:109.2px;height:20px;border:1px solid #b0b0ae;border-radius:4px;background:linear-gradient(#fefefe,#f1f0ee);"></div>
<svg style="left:121.6px;top:881.8px" width="7.6" height="4.8" viewBox="0 0 8 5"><path d="M0 0L4 5L8 0Z" fill="#333"/></svg>
<div class="t mono" style="left:32px;top:875.2px;height:20px;line-height:20px;text-align:left;">Linear</div>
<div class="t mono" style="left:27.2px;top:899.2px;height:20px;line-height:20px;text-align:left;">S</div>
<div class="t zh" style="left:39.2px;top:898px;height:20px;line-height:20px;text-align:left;">平滑处理</div>
<div style="left:27.2px;top:921.2px;width:109.2px;height:20px;border:1px solid #b0b0ae;border-radius:4px;background:linear-gradient(#fefefe,#f1f0ee);"></div>
<svg style="left:121.6px;top:929px" width="7.6" height="4.8" viewBox="0 0 8 5"><path d="M0 0L4 5L8 0Z" fill="#333"/></svg>
<div class="t mono" style="left:32px;top:922.4px;height:20px;line-height:20px;text-align:left;">Linear</div>
<div style="left:27.2px;top:951.2px;width:13.6px;height:13.6px;background:#fff;border:1px solid #a4a4a2;border-radius:2px;"></div>
<div class="t zh" style="left:46px;top:948.4px;height:20px;line-height:20px;text-align:left;">只做平滑处理</div>
<div style="left:27.2px;top:975.2px;width:13.6px;height:13.6px;background:#fff;border:1px solid #a4a4a2;border-radius:2px;"></div>
<svg style="left:28.8px;top:976.4px" width="10.8" height="10.8" viewBox="0 0 10 10"><path d="M1.200 5L4 8.200L9 1.200" fill="none" stroke="#111" stroke-width="2.400"/></svg>
<div class="t zh" style="left:46px;top:972.4px;height:20px;line-height:20px;text-align:left;">只输入<span style="font-family:Liberation Mono,monospace;font-size:10px;font-weight:bold;margin:0 6px;-webkit-text-stroke:0">S</span>数值</div>
<div style="left:27.2px;top:999.2px;width:13.6px;height:13.6px;background:#fff;border:1px solid #a4a4a2;border-radius:2px;"></div>
<svg style="left:28.8px;top:1000.4px" width="10.8" height="10.8" viewBox="0 0 10 10"><path d="M1.200 5L4 8.200L9 1.200" fill="none" stroke="#111" stroke-width="2.400"/></svg>
<div class="t zh" style="left:46px;top:996.4px;height:20px;line-height:20px;text-align:left;">在根上进行测试</div>
<div style="left:144px;top:380.8px;width:383.2px;height:42px;background:#f0eeeb;border:1px solid #dddbd7;border-radius:3px;"></div>
<div class="t zh" style="left:155.2px;top:391.6px;height:20px;line-height:20px;text-align:left;">结果</div>
<div style="left:187px;top:395px;width:12.4px;height:12.4px;border-radius:50%;background:#fff;border:1px solid #8c8c8c;"></div>
<div style="left:190.4px;top:398.4px;width:5.6px;height:5.6px;border-radius:50%;background:#111;"></div>
<div class="t mono" style="left:204.8px;top:392.4px;height:20px;line-height:20px;text-align:left;">K</div>
<div style="left:224.2px;top:395px;width:12.4px;height:12.4px;border-radius:50%;background:#fff;border:1px solid #8c8c8c;"></div>
<div class="t mono" style="left:242.4px;top:392.4px;height:20px;line-height:20px;text-align:left;">S</div>
<div class="btn" style="left:260.8px;top:391.2px;width:80px;height:20px;"></div>
<div class="t zh" style="left:260.8px;top:391.6px;height:20px;line-height:20px;width:80px;text-align:center;">全部使用</div>
<div class="btn" style="left:348px;top:391.2px;width:80px;height:20px;"></div>
<div class="t zh" style="left:348px;top:391.6px;height:20px;line-height:20px;width:80px;text-align:center;">已被使用</div>
<div class="btn" style="left:434.8px;top:391.2px;width:80.4px;height:20px;"></div>
<div class="t zh" style="left:434.8px;top:391.6px;height:20px;line-height:20px;width:80.4px;text-align:center;">未被使用</div>
<div style="left:144px;top:430.8px;width:711.6px;height:468.4px;background:#fff;border:1px solid #bdbcb9;"></div>
<div style="left:144.8px;top:431.6px;width:10.4px;height:454.8px;background:#f2f1ef;border-right:1px solid #cfcecb;"></div>
<div class="hdr" style="left:144.8px;top:431.6px;width:10.4px;height:19.6px;border-right:none;"></div>
<div class="hdr" style="left:155.2px;top:431.6px;width:101.6px;height:19.6px;"></div>
<div class="t ui" style="left:155.2px;top:432px;height:20px;line-height:20px;width:101.6px;text-align:center;color:#333;">name</div>
<div class="hdr" style="left:256.8px;top:431.6px;width:100px;height:19.6px;"></div>
<div class="t ui" style="left:256.8px;top:432px;height:20px;line-height:20px;width:100px;text-align:center;color:#333;">400nm</div>
<div class="hdr" style="left:356.8px;top:431.6px;width:102px;height:19.6px;"></div>
<div class="t ui" style="left:356.8px;top:432px;height:20px;line-height:20px;width:102px;text-align:center;color:#333;">410nm</div>
<div class="hdr" style="left:458.8px;top:431.6px;width:100.4px;height:19.6px;"></div>
<div class="t ui" style="left:458.8px;top:432px;height:20px;line-height:20px;width:100.4px;text-align:center;color:#333;">420nm</div>
<div class="hdr" style="left:559.2px;top:431.6px;width:101.2px;height:19.6px;"></div>
<div class="t ui" style="left:559.2px;top:432px;height:20px;line-height:20px;width:101.2px;text-align:center;color:#333;">430nm</div>
<div class="hdr" style="left:660.4px;top:431.6px;width:101.2px;height:19.6px;"></div>
<div class="t ui" style="left:660.4px;top:432px;height:20px;line-height:20px;width:101.2px;text-align:center;color:#333;">440nm</div>
<div class="hdr" style="left:761.6px;top:431.6px;width:93.2px;height:19.6px;"></div>
<div class="t ui" style="left:761.6px;top:432px;height:20px;line-height:20px;width:93.2px;text-align:center;color:#333;">450nm</div>
<div style="left:144.8px;top:451.2px;width:10.4px;height:30.8px;background:#f2f1ef;border-right:1px solid #cfcecb;border-bottom:1px solid #d6d6d6;"></div>
<div class="t ui" style="left:146.8px;top:457.4px;height:20px;line-height:20px;text-align:left;">1</div>
<div class="cell" style="left:155.2px;top:451.2px;width:101.6px;height:30.8px;"></div>
<div class="t ui" style="left:160px;top:457.4px;height:20px;line-height:20px;text-align:left;">N 122 100%</div>
<div class="cell" style="left:256.8px;top:451.2px;width:100px;height:30.8px;"></div>
<div class="t ui" style="left:261.6px;top:457.4px;height:20px;line-height:20px;text-align:left;">9.18108</div>
<div class="cell" style="left:356.8px;top:451.2px;width:102px;height:30.8px;"></div>
<div class="t ui" style="left:361.6px;top:457.4px;height:20px;line-height:20px;text-align:left;">6.32755</div>
<div class="cell" style="left:458.8px;top:451.2px;width:100.4px;height:30.8px;"></div>
<div class="t ui" style="left:463.6px;top:457.4px;height:20px;line-height:20px;text-align:left;">5.41075</div>
<div class="cell" style="left:559.2px;top:451.2px;width:101.2px;height:30.8px;"></div>
<div class="t ui" style="left:564px;top:457.4px;height:20px;line-height:20px;text-align:left;">5.20841</div>
<div class="cell" style="left:660.4px;top:451.2px;width:101.2px;height:30.8px;"></div>
<div class="t ui" style="left:665.2px;top:457.4px;height:20px;line-height:20px;text-align:left;">5.11687</div>
<div class="cell" style="left:761.6px;top:451.2px;width:93.2px;height:30.8px;"></div>
<div class="t ui" style="left:766.4px;top:457.4px;height:20px;line-height:20px;text-align:left;">4.90282</div>
<div style="left:144.8px;top:482px;width:10.4px;height:30px;background:#f2f1ef;border-right:1px solid #cfcecb;border-bottom:1px solid #d6d6d6;"></div>
<div class="t ui" style="left:146.8px;top:487.8px;height:20px;line-height:20px;text-align:left;">2</div>
<div class="cell" style="left:155.2px;top:482px;width:101.6px;height:30px;"></div>
<div class="t ui" style="left:160px;top:487.8px;height:20px;line-height:20px;text-align:left;">N 122 75%</div>
<div class="cell" style="left:256.8px;top:482px;width:100px;height:30px;"></div>
<div class="t ui" style="left:261.6px;top:487.8px;height:20px;line-height:20px;text-align:left;">1.45286</div>
<div class="cell" style="left:356.8px;top:482px;width:102px;height:30px;"></div>
<div class="t ui" style="left:361.6px;top:487.8px;height:20px;line-height:20px;text-align:left;">1.34142</div>
<div class="cell" style="left:458.8px;top:482px;width:100.4px;height:30px;"></div>
<div class="t ui" style="left:463.6px;top:487.8px;height:20px;line-height:20px;text-align:left;">1.31334</div>
<div class="cell" style="left:559.2px;top:482px;width:101.2px;height:30px;"></div>
<div class="t ui" style="left:564px;top:487.8px;height:20px;line-height:20px;text-align:left;">1.36007</div>
<div class="cell" style="left:660.4px;top:482px;width:101.2px;height:30px;"></div>
<div class="t ui" style="left:665.2px;top:487.8px;height:20px;line-height:20px;text-align:left;">1.42325</div>
<div class="cell" style="left:761.6px;top:482px;width:93.2px;height:30px;"></div>
<div class="t ui" style="left:766.4px;top:487.8px;height:20px;line-height:20px;text-align:left;">1.5061</div>
<div style="left:144.8px;top:512px;width:10.4px;height:30.4px;background:#f2f1ef;border-right:1px solid #cfcecb;border-bottom:1px solid #d6d6d6;"></div>
<div class="t ui" style="left:146.8px;top:518px;height:20px;line-height:20px;text-align:left;">3</div>
<div class="cell" style="left:155.2px;top:512px;width:101.6px;height:30.4px;"></div>
<div class="t ui" style="left:160px;top:518px;height:20px;line-height:20px;text-align:left;">N 122 50%</div>
<div class="cell" style="left:256.8px;top:512px;width:100px;height:30.4px;"></div>
<div class="t ui" style="left:261.6px;top:518px;height:20px;line-height:20px;text-align:left;">1.67029</div>
<div class="cell" style="left:356.8px;top:512px;width:102px;height:30.4px;"></div>
<div class="t ui" style="left:361.6px;top:518px;height:20px;line-height:20px;text-align:left;">1.54981</div>
<div class="cell" style="left:458.8px;top:512px;width:100.4px;height:30.4px;"></div>
<div class="t ui" style="left:463.6px;top:518px;height:20px;line-height:20px;text-align:left;">1.50982</div>
<div class="cell" style="left:559.2px;top:512px;width:101.2px;height:30.4px;"></div>
<div class="t ui" style="left:564px;top:518px;height:20px;line-height:20px;text-align:left;">1.54136</div>
<div class="cell" style="left:660.4px;top:512px;width:101.2px;height:30.4px;"></div>
<div class="t ui" style="left:665.2px;top:518px;height:20px;line-height:20px;text-align:left;">1.58996</div>
<div class="cell" style="left:761.6px;top:512px;width:93.2px;height:30.4px;"></div>
<div class="t ui" style="left:766.4px;top:518px;height:20px;line-height:20px;text-align:left;">1.65119</div>
<div style="left:144.8px;top:542.4px;width:10.4px;height:30.4px;background:#f2f1ef;border-right:1px solid #cfcecb;border-bottom:1px solid #d6d6d6;"></div>
<div class="t ui" style="left:146.8px;top:548.4px;height:20px;line-height:20px;text-align:left;">4</div>
<div class="cell" style="left:155.2px;top:542.4px;width:101.6px;height:30.4px;"></div>
<div class="t ui" style="left:160px;top:548.4px;height:20px;line-height:20px;text-align:left;">N 122 25%</div>
<div class="cell" style="left:256.8px;top:542.4px;width:100px;height:30.4px;"></div>
<div class="t ui" style="left:261.6px;top:548.4px;height:20px;line-height:20px;text-align:left;">1.97345</div>
<div class="cell" style="left:356.8px;top:542.4px;width:102px;height:30.4px;"></div>
<div class="t ui" style="left:361.6px;top:548.4px;height:20px;line-height:20px;text-align:left;">1.82916</div>
<div class="cell" style="left:458.8px;top:542.4px;width:100.4px;height:30.4px;"></div>
<div class="t ui" style="left:463.6px;top:548.4px;height:20px;line-height:20px;text-align:left;">1.77432</div>
<div class="cell" style="left:559.2px;top:542.4px;width:101.2px;height:30.4px;"></div>
<div class="t ui" style="left:564px;top:548.4px;height:20px;line-height:20px;text-align:left;">1.80259</div>
<div class="cell" style="left:660.4px;top:542.4px;width:101.2px;height:30.4px;"></div>
<div class="t ui" style="left:665.2px;top:548.4px;height:20px;line-height:20px;text-align:left;">1.85433</div>
<div class="cell" style="left:761.6px;top:542.4px;width:93.2px;height:30.4px;"></div>
<div class="t ui" style="left:766.4px;top:548.4px;height:20px;line-height:20px;text-align:left;">1.92175</div>
<div style="left:144.8px;top:572.8px;width:10.4px;height:30px;background:#f2f1ef;border-right:1px solid #cfcecb;border-bottom:1px solid #d6d6d6;"></div>
<div class="t ui" style="left:146.8px;top:578.6px;height:20px;line-height:20px;text-align:left;">5</div>
<div class="cell" style="left:155.2px;top:572.8px;width:101.6px;height:30px;"></div>
<div class="t ui" style="left:160px;top:578.6px;height:20px;line-height:20px;text-align:left;">N 122 5%</div>
<div class="cell" style="left:256.8px;top:572.8px;width:100px;height:30px;"></div>
<div class="t ui" style="left:261.6px;top:578.6px;height:20px;line-height:20px;text-align:left;">2.52401</div>
<div class="cell" style="left:356.8px;top:572.8px;width:102px;height:30px;"></div>
<div class="t ui" style="left:361.6px;top:578.6px;height:20px;line-height:20px;text-align:left;">2.30241</div>
<div class="cell" style="left:458.8px;top:572.8px;width:100.4px;height:30px;"></div>
<div class="t ui" style="left:463.6px;top:578.6px;height:20px;line-height:20px;text-align:left;">2.20116</div>
<div class="cell" style="left:559.2px;top:572.8px;width:101.2px;height:30px;"></div>
<div class="t ui" style="left:564px;top:578.6px;height:20px;line-height:20px;text-align:left;">2.2133</div>
<div class="cell" style="left:660.4px;top:572.8px;width:101.2px;height:30px;"></div>
<div class="t ui" style="left:665.2px;top:578.6px;height:20px;line-height:20px;text-align:left;">2.26108</div>
<div class="cell" style="left:761.6px;top:572.8px;width:93.2px;height:30px;"></div>
<div class="t ui" style="left:766.4px;top:578.6px;height:20px;line-height:20px;text-align:left;">2.32994</div>
<div style="left:144.8px;top:886px;width:710px;height:12.8px;background:#dddcd9;border-top:1px solid #cfcecb;"></div>
<div style="left:144.8px;top:886px;width:10.4px;height:12.8px;background:#f1f0ee;"></div>
<div style="left:841.2px;top:886px;width:13.6px;height:12.8px;background:#f1f0ee;"></div>
<div style="left:155.2px;top:886.8px;width:127.2px;height:11.6px;background:#f6f5f3;border:1px solid #cbcac7;"></div>
<svg style="left:148px;top:888.8px" width="4.8" height="7.6" viewBox="0 0 5 8"><path d="M5 0L0 4L5 8Z" fill="#222"/></svg>
<svg style="left:845.6px;top:888.8px" width="4.8" height="7.6" viewBox="0 0 5 8"><path d="M0 0L5 4L0 8Z" fill="#222"/></svg>
<div class="t zh" style="left:144.8px;top:908.4px;height:20px;line-height:20px;text-align:left;">染料</div>
<div class="t zh" style="left:222px;top:908.4px;height:20px;line-height:20px;text-align:left;">浓度</div>
<div class="t zh" style="left:254px;top:908.4px;height:20px;line-height:20px;text-align:left;">价格</div>
<div style="left:144.8px;top:936px;width:71.6px;height:20.8px;border:1px solid #b0b0ae;border-radius:4px;background:linear-gradient(#fefefe,#f1f0ee);"></div>
<svg style="left:201.6px;top:944.2px" width="7.6" height="4.8" viewBox="0 0 8 5"><path d="M0 0L4 5L8 0Z" fill="#333"/></svg>
<div class="t mono" style="left:148px;top:937.6px;height:20px;line-height:20px;text-align:left;">N 122 5%</div>
<div class="inp" style="left:222.8px;top:936px;width:23.6px;height:20.8px;"></div>
<div class="t mono" style="left:226px;top:937.6px;height:20px;line-height:20px;text-align:left;">5</div>
<div class="inp" style="left:253.2px;top:936px;width:79.6px;height:20.8px;"></div>
<div class="t zh" style="left:257.2px;top:936.8px;height:20px;line-height:20px;text-align:left;color:#a8a8a8;">价格</div>
<div class="inp" style="left:340.4px;top:936px;width:80px;height:20.8px;"></div>
<div class="t mono" style="left:343.2px;top:937.6px;height:20px;line-height:20px;text-align:left;font-weight:normal;">0.420514</div>
<div class="btn" style="left:340.4px;top:908.8px;width:80px;height:18.4px;"></div>
<div class="t mono" style="left:340.4px;top:909.2px;height:20px;line-height:20px;width:80px;text-align:center;">K1</div>
<div class="t zh" style="left:144.8px;top:964.4px;height:20px;line-height:20px;text-align:left;">混合染料</div>
<div class="t zh" style="left:222px;top:964.4px;height:20px;line-height:20px;text-align:left;">浓度</div>
<div class="btn" style="left:253.2px;top:965.2px;width:79.6px;height:19.2px;"></div>
<div class="t mono" style="left:253.2px;top:966px;height:20px;line-height:20px;width:79.6px;text-align:center;">KMS</div>
<div class="btn" style="left:340.4px;top:965.2px;width:80px;height:19.2px;"></div>
<div class="t zh" style="left:340.4px;top:965.2px;height:20px;line-height:20px;width:80px;text-align:center;">核实</div>
<div style="left:144.8px;top:992.8px;width:71.6px;height:20.4px;border:1px solid #b0b0ae;border-radius:4px;background:linear-gradient(#fefefe,#f1f0ee);"></div>
<svg style="left:201.6px;top:1000.8px" width="7.6" height="4.8" viewBox="0 0 8 5"><path d="M0 0L4 5L8 0Z" fill="#333"/></svg>
<div class="inp" style="left:222.8px;top:992.8px;width:23.6px;height:20.4px;background:#f1f0ee;border-color:#d0cfcc;"></div>
<div class="t mono" style="left:226px;top:994px;height:20px;line-height:20px;text-align:left;color:#c4c4c4;font-weight:normal;">96</div>
<div class="btn" style="left:253.2px;top:994px;width:79.6px;height:19.2px;"></div>
<div class="t zh" style="left:253.2px;top:994px;height:20px;line-height:20px;width:79.6px;text-align:center;">清除</div>
<div class="btn" style="left:340.4px;top:994px;width:80px;height:19.2px;"></div>
<div class="t zh" style="left:340.4px;top:994px;height:20px;line-height:20px;width:80px;text-align:center;">保存</div>
<div class="t zh" style="left:427.2px;top:904.4px;height:20px;line-height:20px;text-align:left;">类别</div>
<div style="left:430px;top:924px;width:70.4px;height:91.2px;background:#f0eeeb;border:1px solid #dddbd7;border-radius:3px;"></div>
<div style="left:439.8px;top:940.2px;width:12.4px;height:12.4px;border-radius:50%;background:#fff;border:1px solid #8c8c8c;"></div>
<div class="t zh" style="left:459.2px;top:936.4px;height:20px;line-height:20px;text-align:left;">白色</div>
<div style="left:439.8px;top:963.4px;width:12.4px;height:12.4px;border-radius:50%;background:#fff;border:1px solid #8c8c8c;"></div>
<div class="t zh" style="left:459.2px;top:959.6px;height:20px;line-height:20px;text-align:left;">黑色</div>
<div style="left:439.8px;top:987px;width:12.4px;height:12.4px;border-radius:50%;background:#fff;border:1px solid #8c8c8c;"></div>
<div style="left:443.2px;top:990.4px;width:5.6px;height:5.6px;border-radius:50%;background:#111;"></div>
<div class="t zh" style="left:459.2px;top:983.2px;height:20px;line-height:20px;text-align:left;">其他</div>
<div style="left:876.8px;top:326.8px;width:996px;height:696px;background:#fff;border:1.8px solid #4c88c4;border-bottom-color:#6c98c0;border-radius:0 0 4px 4px;box-shadow:0 2px 10px 1px rgba(0,0,0,.28);"></div>
<div style="left:876.8px;top:326.8px;width:996px;height:30.6px;background:#0a78d4;"></div>
<svg style="left:884.8px;top:333.2px" width="17.2" height="17.2" viewBox="0 0 40 40" preserveAspectRatio="none"><defs><linearGradient id="rb2" x1="0" x2="1" y1="0" y2="0"><stop offset="0" stop-color="#3818c8"/><stop offset=".2" stop-color="#2040e8"/><stop offset=".3" stop-color="#40c840"/><stop offset=".42" stop-color="#e8e818"/><stop offset=".58" stop-color="#f0d010"/><stop offset=".68" stop-color="#f03010"/><stop offset="1" stop-color="#e01010"/></linearGradient></defs><rect width="40" height="40" fill="url(#rb2)"/></svg>
<div class="t zh" style="left:907.2px;top:332.4px;height:20px;line-height:20px;text-align:left;color:#fff;-webkit-text-stroke:0;font-weight:300;">光谱曲线图表</div>
<div class="t ui" style="left:1797.2px;top:332.4px;height:20px;line-height:20px;width:10px;text-align:center;color:#fff;font-size:13px;">?</div>
<svg style="left:1843.2px;top:336.8px" width="11.2" height="11.2" viewBox="0 0 10 10"><path d="M0 0L10 10M10 0L0 10" stroke="#fff" stroke-width="1.500"/></svg>
<svg style="left:876.8px;top:326.8px" width="996" height="696" viewBox="0 0 996 696"><defs><linearGradient id="spec" x1="0" x2="1" y1="0" y2="0"><stop offset="0.0000" stop-color="#3a0050"/><stop offset="0.0375" stop-color="#5a0090"/><stop offset="0.0750" stop-color="#7800c8"/><stop offset="0.1125" stop-color="#6a00f0"/><stop offset="0.1500" stop-color="#1a00ff"/><stop offset="0.1875" stop-color="#0040ff"/><stop offset="0.2250" stop-color="#0098ff"/><stop offset="0.2625" stop-color="#00d8ff"/><stop offset="0.2875" stop-color="#00ffc8"/><stop offset="0.3250" stop-color="#00ff30"/><stop offset="0.3875" stop-color="#50ff00"/><stop offset="0.4375" stop-color="#a8ff00"/><stop offset="0.4875" stop-color="#f8ff00"/><stop offset="0.5250" stop-color="#ffc800"/><stop offset="0.5625" stop-color="#ff8c00"/><stop offset="0.6125" stop-color="#ff3800"/><stop offset="0.6625" stop-color="#ff0000"/><stop offset="0.8000" stop-color="#f00000"/><stop offset="0.8750" stop-color="#c80000"/><stop offset="0.9375" stop-color="#980000"/><stop offset="1.0000" stop-color="#5c0000"/></linearGradient></defs><path d="M91.20 92.60V636.80M175.04 92.60V636.80M258.88 92.60V636.80M342.72 92.60V636.80M426.56 92.60V636.80M510.40 92.60V636.80M594.24 92.60V636.80M678.08 92.60V636.80M761.92 92.60V636.80M845.76 92.60V636.80M929.60 92.60V636.80M91.20 636.80H929.60M91.20 582.38H929.60M91.20 527.96H929.60M91.20 473.54H929.60M91.20 419.12H929.60M91.20 364.70H929.60M91.20 310.28H929.60M91.20 255.86H929.60M91.20 201.44H929.60M91.20 147.02H929.60M91.20 92.60H929.60" stroke="#e5e5e5" stroke-width="1" fill="none"/><path d="M91.20 92.60V636.80" stroke="#cfcfcf" stroke-width="1" fill="none"/><path d="M133.1 411.0C136.6 409.4 147.1 404.0 154.1 401.7C161.1 399.4 168.1 398.2 175.0 397.4C182.0 396.5 189.0 396.5 196.0 396.8C203.0 397.1 206.5 397.6 217.0 399.0C227.4 400.3 244.9 402.8 258.9 405.0C272.9 407.1 286.8 409.8 300.8 412.1C314.8 414.3 330.1 417.0 342.7 418.6C355.3 420.1 367.5 420.6 376.3 421.3C385.0 422.0 390.2 422.7 395.1 422.9C400.0 423.1 402.1 423.0 405.6 422.4C409.1 421.8 412.6 421.0 416.1 419.1C419.6 417.2 423.1 415.3 426.6 411.0C430.0 406.6 433.3 400.1 436.8 393.0C440.4 385.9 444.9 375.1 447.7 368.5C450.6 361.9 451.6 359.4 454.0 353.3C456.4 347.1 459.2 340.5 462.0 331.5C464.7 322.5 467.3 310.9 470.6 299.4C473.9 287.9 477.7 273.9 481.7 262.4C485.7 250.9 489.7 240.0 494.5 230.3C499.3 220.6 505.3 211.7 510.4 204.2C515.5 196.6 520.2 190.2 525.3 185.1C530.3 180.0 535.7 176.7 540.8 173.7C545.9 170.7 551.0 168.9 556.1 167.2C561.2 165.4 565.2 164.2 571.6 163.3C578.0 162.5 587.2 162.9 594.2 162.3C601.3 161.6 606.2 160.1 613.7 159.5C621.3 159.0 628.8 159.2 639.5 159.0C650.2 158.8 667.4 158.8 678.1 158.4C688.8 158.1 695.3 158.1 703.9 156.8C712.4 155.6 719.8 153.7 729.4 150.8C739.1 147.9 752.9 142.7 761.9 139.4C770.9 136.1 779.9 132.6 783.5 131.2" stroke="#dfcbc3" stroke-width="1.150" fill="none"/><path d="M133.1 544.3C136.3 542.9 145.4 538.1 152.4 536.1C159.4 534.1 168.6 532.9 175.0 532.3C181.5 531.7 184.1 531.9 191.0 532.3C197.9 532.8 205.2 533.7 216.5 535.0C227.9 536.4 246.0 538.8 258.9 540.5C271.8 542.2 280.1 544.0 294.1 545.4C308.1 546.7 329.4 547.7 342.7 548.6C356.1 549.5 365.3 550.3 374.2 550.8C383.1 551.4 389.9 552.4 396.2 551.9C402.4 551.4 406.6 550.5 411.7 548.1C416.7 545.7 422.4 541.4 426.6 537.2C430.7 533.0 433.2 528.5 436.4 523.1C439.6 517.6 442.7 511.3 445.8 504.6C448.9 497.8 452.9 488.0 455.1 482.8C457.2 477.6 455.6 484.2 458.8 473.5C462.1 462.9 469.3 437.3 474.6 419.1C479.8 401.0 485.2 382.8 490.5 364.7C495.7 346.6 501.6 323.9 506.0 310.3C510.4 296.7 512.8 292.1 516.7 283.1C520.6 274.0 525.2 264.3 529.3 255.9C533.3 247.4 536.3 240.0 540.8 232.5C545.3 224.9 551.0 216.3 556.1 210.7C561.2 205.1 566.4 201.4 571.6 198.7C576.8 196.0 583.3 195.3 587.1 194.4C590.9 193.5 590.8 194.2 594.2 193.3C597.7 192.4 602.8 190.4 607.6 188.9C612.5 187.5 618.3 185.5 623.6 184.6C628.9 183.7 630.4 184.1 639.5 183.5C648.6 182.8 667.4 181.2 678.1 180.8C688.8 180.3 695.3 181.3 703.9 180.8C712.4 180.2 719.8 179.9 729.4 177.5C739.1 175.1 752.9 169.9 761.9 166.1C770.9 162.3 779.9 156.5 783.5 154.6" stroke="#cc9a86" stroke-width="1.150" fill="none"/><path d="M133.1 588.9C136.3 587.9 145.4 584.2 152.4 582.9C159.4 581.6 164.3 581.5 175.0 581.3C185.7 581.1 202.6 581.3 216.5 581.8C230.5 582.4 246.0 583.7 258.9 584.6C271.8 585.4 280.1 586.0 294.1 586.7C308.1 587.5 327.6 588.3 342.7 588.9C357.8 589.5 374.2 590.2 384.6 590.5C395.1 590.9 400.1 591.5 405.6 591.1C411.1 590.7 414.3 589.7 417.8 588.4C421.3 587.0 423.5 585.7 426.6 582.9C429.7 580.1 432.7 577.3 436.4 571.5C440.1 565.7 444.8 556.6 449.0 548.1C453.1 539.6 457.9 529.1 461.4 520.3C464.8 511.5 467.1 503.1 469.7 495.3C472.4 487.5 473.1 486.2 477.1 473.5C481.1 460.8 488.4 437.3 493.8 419.1C499.3 401.0 504.1 382.8 509.8 364.7C515.5 346.6 523.4 323.9 528.0 310.3C532.7 296.7 533.8 292.0 537.6 283.1C541.5 274.2 547.3 264.0 551.3 256.9C555.2 249.9 557.1 246.0 561.3 240.6C565.6 235.3 571.4 228.6 576.8 224.8C582.3 221.1 589.1 220.2 594.2 218.3C599.4 216.4 602.8 215.0 607.6 213.4C612.5 211.8 618.3 210.0 623.6 208.5C628.9 207.1 630.4 205.8 639.5 204.7C648.6 203.6 667.4 202.3 678.1 202.0C688.8 201.6 695.3 203.0 703.9 202.5C712.4 202.1 719.8 201.7 729.4 199.3C739.1 196.8 752.9 191.4 761.9 187.8C770.9 184.3 779.9 179.7 783.5 178.0" stroke="#c4836a" stroke-width="1.150" fill="none"/><path d="M133.1 610.1C136.3 609.3 145.4 606.3 152.4 605.2C159.4 604.2 164.3 603.9 175.0 603.6C185.7 603.3 202.6 603.4 216.5 603.6C230.5 603.8 244.8 604.3 258.9 604.7C272.9 605.1 286.8 605.3 300.8 605.8C314.8 606.2 328.7 607.0 342.7 607.4C356.7 607.9 374.2 608.2 384.6 608.5C395.1 608.8 399.7 609.3 405.6 609.0C411.5 608.8 416.1 608.2 420.3 606.9C424.4 605.5 426.6 604.4 430.3 600.9C434.1 597.3 438.6 591.8 442.7 585.6C446.8 579.5 450.9 572.2 455.1 563.9C459.2 555.5 463.5 545.5 467.6 535.6C471.8 525.7 476.2 514.9 480.0 504.6C483.9 494.2 486.3 487.8 490.7 473.5C495.1 459.3 500.9 437.3 506.4 419.1C512.0 401.0 518.2 382.8 524.0 364.7C529.9 346.6 536.5 323.9 541.4 310.3C546.3 296.7 548.9 291.4 553.4 283.1C557.8 274.7 563.3 266.6 568.0 260.2C572.8 253.8 577.5 248.1 581.9 244.4C586.2 240.7 589.9 239.9 594.2 237.9C598.5 235.9 602.8 234.2 607.6 232.5C612.5 230.7 618.3 229.2 623.6 227.6C628.9 225.9 630.4 224.1 639.5 222.7C648.6 221.2 667.4 219.6 678.1 218.8C688.8 218.1 695.3 219.0 703.9 218.3C712.4 217.6 719.8 216.5 729.4 214.5C739.1 212.5 752.9 208.6 761.9 206.3C770.9 204.1 779.9 201.8 783.5 200.9" stroke="#bd7558" stroke-width="1.150" fill="none"/><path d="M133.1 622.1C136.3 621.5 145.4 619.3 152.4 618.3C159.4 617.3 164.3 616.6 175.0 616.1C185.7 615.7 202.6 615.8 216.5 615.6C230.5 615.4 237.8 615.2 258.9 615.0C279.9 614.8 320.0 614.3 342.7 614.5C365.4 614.7 383.6 615.8 395.1 616.1C406.6 616.4 407.0 616.5 411.9 616.1C416.8 615.8 420.9 615.1 424.5 613.9C428.1 612.8 429.9 612.0 433.5 609.0C437.0 606.1 441.7 602.0 445.8 596.5C450.0 591.1 454.1 583.9 458.2 576.4C462.3 568.9 466.4 560.2 470.6 551.4C474.7 542.5 479.4 532.4 483.1 523.1C486.9 513.7 490.2 503.6 493.2 495.3C496.2 487.1 497.1 486.2 501.2 473.5C505.3 460.8 512.2 437.3 518.0 419.1C523.7 401.0 529.2 382.8 535.5 364.7C541.9 346.6 551.1 323.4 556.3 310.3C561.5 297.1 562.5 293.8 567.0 285.8C571.5 277.8 578.6 267.6 583.1 262.4C587.7 257.2 590.2 257.0 594.2 254.8C598.3 252.5 602.8 250.5 607.6 248.8C612.5 247.1 618.3 246.2 623.6 244.4C628.9 242.6 630.4 239.8 639.5 237.9C648.6 236.0 667.4 234.0 678.1 233.0C688.8 232.0 695.3 232.9 703.9 231.9C712.4 230.9 721.3 228.6 729.4 227.0C737.6 225.5 747.3 223.6 752.7 222.7C758.1 221.8 758.5 221.5 761.9 221.6C765.4 221.7 769.9 222.4 773.5 223.2C777.0 224.0 781.8 225.9 783.5 226.5" stroke="#b76848" stroke-width="1.150" fill="none"/><path d="M133.1 624.8C136.3 623.9 145.4 620.7 152.4 619.4C159.4 618.1 164.3 617.8 175.0 617.2C185.7 616.7 202.6 616.4 216.5 616.1C230.5 615.8 237.8 615.8 258.9 615.6C279.9 615.4 320.0 614.9 342.7 615.0C365.4 615.2 383.6 616.4 395.1 616.7C406.6 616.9 406.8 617.0 411.9 616.7C417.0 616.3 421.7 615.7 425.5 614.5C429.4 613.3 431.3 612.5 434.9 609.6C438.6 606.7 443.3 602.5 447.5 597.1C451.7 591.6 455.9 584.6 460.1 576.9C464.3 569.3 468.5 560.3 472.7 551.4C476.8 542.4 481.1 532.4 484.8 523.1C488.5 513.7 491.9 503.6 494.9 495.3C497.9 487.1 498.7 486.2 502.9 473.5C507.0 460.8 514.2 437.3 520.0 419.1C525.9 401.0 531.1 382.8 538.1 364.7C545.0 346.6 555.5 323.0 561.8 310.3C568.0 297.6 570.0 295.0 575.4 288.5C580.8 282.0 586.2 275.5 594.2 271.1C602.3 266.7 616.0 264.4 623.6 262.4C631.1 260.4 630.4 260.2 639.5 259.1C648.6 258.0 667.4 256.1 678.1 255.9C688.8 255.6 695.3 257.5 703.9 257.5C712.4 257.5 719.8 256.5 729.4 255.9C739.1 255.2 752.9 254.4 761.9 253.7C770.9 253.0 779.9 251.9 783.5 251.5" stroke="#b26040" stroke-width="1.150" fill="none"/><rect x="91.20" y="638.40" width="837.2" height="19.2" fill="url(#spec)"/></svg>
<div class="t ax" style="left:910px;top:954.6px;height:20px;line-height:20px;width:53.6px;text-align:right;">0.00%</div>
<div class="t ax" style="left:910px;top:900.18px;height:20px;line-height:20px;width:53.6px;text-align:right;">10.00%</div>
<div class="t ax" style="left:910px;top:845.76px;height:20px;line-height:20px;width:53.6px;text-align:right;">20.00%</div>
<div class="t ax" style="left:910px;top:791.34px;height:20px;line-height:20px;width:53.6px;text-align:right;">30.00%</div>
<div class="t ax" style="left:910px;top:736.92px;height:20px;line-height:20px;width:53.6px;text-align:right;">40.00%</div>
<div class="t ax" style="left:910px;top:682.5px;height:20px;line-height:20px;width:53.6px;text-align:right;">50.00%</div>
<div class="t ax" style="left:910px;top:628.08px;height:20px;line-height:20px;width:53.6px;text-align:right;">60.00%</div>
<div class="t ax" style="left:910px;top:573.66px;height:20px;line-height:20px;width:53.6px;text-align:right;">70.00%</div>
<div class="t ax" style="left:910px;top:519.24px;height:20px;line-height:20px;width:53.6px;text-align:right;">80.00%</div>
<div class="t ax" style="left:910px;top:464.82px;height:20px;line-height:20px;width:53.6px;text-align:right;">90.00%</div>
<div class="t ax" style="left:910px;top:410.4px;height:20px;line-height:20px;width:53.6px;text-align:right;">100.00%</div>
<div class="t ax" style="left:910px;top:966.4px;height:20px;line-height:20px;width:55.2px;text-align:right;">380.</div>
<div class="t ax" style="left:1021.84px;top:966.4px;height:20px;line-height:20px;width:60px;text-align:center;color:rgba(30,0,50,.45);">420.00nm</div>
<div class="t ax" style="left:1105.68px;top:966.4px;height:20px;line-height:20px;width:60px;text-align:center;color:rgba(10,20,60,.7);">460.00nm</div>
<div class="t ax" style="left:1189.52px;top:966.4px;height:20px;line-height:20px;width:60px;text-align:center;color:rgba(20,20,20,.82);">500.00nm</div>
<div class="t ax" style="left:1273.36px;top:966.4px;height:20px;line-height:20px;width:60px;text-align:center;color:rgba(20,20,20,.82);">540.00nm</div>
<div class="t ax" style="left:1357.2px;top:966.4px;height:20px;line-height:20px;width:60px;text-align:center;color:rgba(20,20,20,.82);">580.00nm</div>
<div class="t ax" style="left:1441.04px;top:966.4px;height:20px;line-height:20px;width:60px;text-align:center;color:rgba(20,20,20,.82);">620.00nm</div>
<div class="t ax" style="left:1524.88px;top:966.4px;height:20px;line-height:20px;width:60px;text-align:center;color:rgba(110,0,0,.55);">660.00nm</div>
<div class="t ax" style="left:1608.72px;top:966.4px;height:20px;line-height:20px;width:60px;text-align:center;color:rgba(110,0,0,.55);">700.00nm</div>
<div class="t ax" style="left:1692.56px;top:966.4px;height:20px;line-height:20px;width:60px;text-align:center;color:rgba(110,0,0,.55);">740.00nm</div>
<div class="t ax" style="left:1776.4px;top:966.4px;height:20px;line-height:20px;width:60px;text-align:center;">780.00nm</div>
<div class="t zh" style="left:1350px;top:394.4px;height:20px;line-height:20px;width:48.8px;text-align:center;color:#444;">光谱曲线</div>
<div style="left:1678.8px;top:432.6px;width:7.6px;height:7.6px;background:#a04a3c;border:1px solid #7a3a30;"></div>
<div class="t ax" style="left:1690px;top:426.4px;height:20px;line-height:20px;text-align:left;">N1&nbsp;100</div>
<div style="left:1678.8px;top:453.52px;width:7.6px;height:7.6px;background:#b4604a;border:1px solid #7a3a30;"></div>
<div class="t ax" style="left:1690px;top:447.32px;height:20px;line-height:20px;text-align:left;">N1&nbsp;75</div>
<div style="left:1678.8px;top:474.44px;width:7.6px;height:7.6px;background:#c88060;border:1px solid #7a3a30;"></div>
<div class="t ax" style="left:1690px;top:468.24px;height:20px;line-height:20px;text-align:left;">N1&nbsp;50</div>
<div style="left:1678.8px;top:495.36px;width:7.6px;height:7.6px;background:#dca898;border:1px solid #7a3a30;"></div>
<div class="t ax" style="left:1690px;top:489.16px;height:20px;line-height:20px;text-align:left;">N1&nbsp;25</div>
<div style="left:1678.8px;top:516.28px;width:7.6px;height:7.6px;background:#f2ece8;border:1px solid #7a3a30;"></div>
<div class="t ax" style="left:1690px;top:510.08px;height:20px;line-height:20px;text-align:left;">N1&nbsp;5</div>
<div style="left:1678.8px;top:537.2px;width:7.6px;height:7.6px;background:#a85038;border:1px solid #7a3a30;"></div>
<div class="t ax" style="left:1690px;top:531px;height:20px;line-height:20px;text-align:left;">N&nbsp;122&nbsp;100%</div>
</div></body></html>
